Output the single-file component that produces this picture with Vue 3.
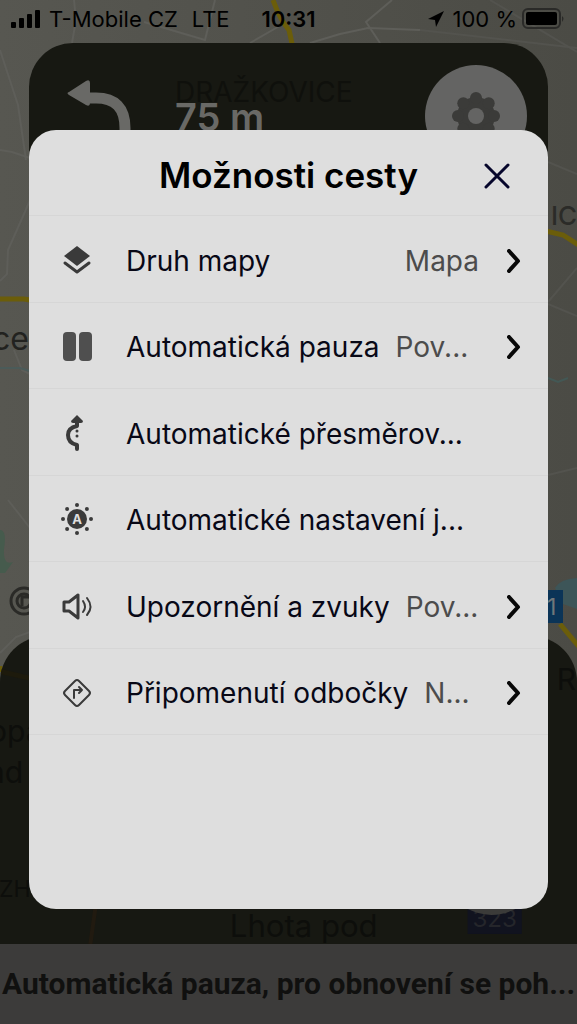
<template>
  <div class="screen">
    <!-- Map canvas under everything -->
    <svg class="map" viewBox="0 0 577 1024" preserveAspectRatio="xMidYMid slice" aria-hidden="true">
      <defs>
        <linearGradient id="land" x1="0" y1="0" x2="1" y2="0">
          <stop offset="0" stop-color="#575751" />
          <stop offset="1" stop-color="#4b4b45" />
        </linearGradient>
      </defs>
      <rect width="577" height="1024" fill="url(#land)" />
      <g class="minor-roads">
        <path d="M0 50 L18 105 L26 160" />
        <path d="M0 150 L12 152 L30 158" />
        <path d="M30 200 L24 214 L8 250 L7 274 L0 281" />
        <path d="M74 0 L76 20 L72 43" />
        <path d="M144 22 L205 40 L215 0" />
        <path d="M250 43 L283 24 M310 43 L340 34 L368 28 L420 30" />
        <path d="M392 0 L366 22 L380 43" />
        <path d="M14 350 L22 370 L30 374" />
        <path d="M8 500 L30 528" />
        <path d="M0 653 L16 637 L30 632" />
      </g>
      <g class="minor-roads dim">
        <path d="M420 30 L577 48" />
        <path d="M490 0 L577 52" />
        <path d="M548 162 L577 174" />
        <path d="M548 302 L577 268 M548 304 L577 316" />
        <path d="M548 475 L577 468" />
      </g>
      <path d="M0 368 H20 L30 371" fill="none" stroke="#4b5b59" stroke-width="2" />
      <path d="M548 378 L558 382 L568 378" fill="none" stroke="#435855" stroke-width="2" />
      <path d="M0 530 Q7 530 4 549 Q3 566 13 562 L5 573 H0Z" fill="#465b4d" />
      <path d="M555 588 Q560 579 577 578 V609 L563 604Z" fill="#3d5558" />
      <g class="main-roads">
        <path d="M273 0 Q280 20 289 30 L293 48" />
        <path d="M0 299 H24 L30 300" />
        <path d="M546 231 L563 235 L580 246" />
        <path d="M560 624 L580 648" />
        <path d="M0 672 V666" />
      </g>
      <text x="-8" y="350" class="town">ce</text>
      <text x="551" y="225" class="village">IC</text>
      <g fill="none" stroke="#2a2a27" stroke-width="3">
        <circle cx="24" cy="601" r="13" />
        <circle cx="24" cy="601" r="7" />
        <path d="M22 606 V597 H29" />
      </g>
      <rect x="530" y="590" width="33" height="33" fill="#0b3457" />
      <text x="547" y="615" class="shield">1</text>
    </svg>

    <!-- Ride screen -->
    <div class="ride">
      <header class="status">
        <div class="status-side">
          <svg class="signal" viewBox="0 0 30 20" aria-hidden="true">
            <rect x="0" y="13" width="5" height="6" rx="1" />
            <rect x="8" y="9" width="5" height="10" rx="1" />
            <rect x="16" y="5" width="5" height="14" rx="1" />
            <rect x="24" y="1" width="5" height="18" rx="1" />
          </svg>
          <span class="carrier">T-Mobile CZ</span>
          <span>LTE</span>
        </div>
        <time class="clock">10:31</time>
        <div class="status-side right">
          <svg class="location" viewBox="0 0 18 18" aria-hidden="true">
            <path d="M17 1 L1 9 L8 10 L9 17Z" />
          </svg>
          <span>100 %</span>
          <svg class="battery" viewBox="0 0 44 22" aria-hidden="true">
            <rect x="1" y="1" width="37" height="19" rx="5" fill="none" stroke="#2a2a28" stroke-width="2" />
            <rect x="4" y="4" width="31" height="13" rx="2" />
            <path d="M40 8 Q43 10 40 14Z" fill="#2a2a28" />
          </svg>
        </div>
      </header>

      <section class="turn">
        <svg class="turn-arrow" viewBox="0 0 68 70" aria-hidden="true">
          <path d="M22 19 H30 Q59 19 59 49 V70" fill="none" stroke="#696966" stroke-width="11" />
          <path d="M3 13 L20 2 Q24 0 24 4 V24 Q24 28 20 26 L3 16 Q0 14 3 13Z" fill="#696966" />
        </svg>
        <div class="turn-text">
          <span class="ghost-label">DRAŽKOVICE</span>
          <strong>75 m</strong>
        </div>
        <button class="gear" type="button" aria-label="Nastavení">
          <svg viewBox="0 0 48 48" aria-hidden="true">
            <g fill="#3b3b39">
              <circle cx="24" cy="24" r="19" />
              <circle v-for="t in teeth" :key="t.cx + '-' + t.cy" :cx="t.cx" :cy="t.cy" r="6" />
            </g>
            <circle cx="24" cy="24" r="8" fill="#646463" />
          </svg>
        </button>
      </section>

      <section class="panel">
        <svg viewBox="0 0 577 307" preserveAspectRatio="xMidYMax slice" aria-hidden="true">
          <path d="M97 264 L102 245 M97 264 L91 307" stroke="#211a10" stroke-width="4" />
          <path d="M0 35 L30 42" stroke="#1d1a0c" stroke-width="5" />
          <g class="ghost">
            <text x="-10" y="106">opa</text>
            <text x="-12" y="147">nd</text>
            <text x="556" y="54">R</text>
            <text x="0" y="260" class="small">ZH</text>
            <text x="230" y="300" class="wide">Lhota pod</text>
          </g>
          <rect x="467" y="268" width="54" height="29" fill="#11131f" />
          <text x="494" y="290" class="route">323</text>
          <circle cx="491" cy="228" r="50" fill="#3b3b39" />
        </svg>
      </section>

      <footer class="banner">Automatická pauza, pro obnovení se poh...</footer>
    </div>

    <!-- Options dialog -->
    <div class="layer">
      <section class="dialog" role="dialog" aria-modal="true" aria-labelledby="dialog-title">
        <header class="dialog-head">
          <h1 id="dialog-title">Možnosti cesty</h1>
          <button class="close" type="button" aria-label="Zavřít">
            <svg viewBox="0 0 26 26" aria-hidden="true">
              <path d="M2 2 L24 24 M24 2 L2 24" />
            </svg>
          </button>
        </header>

        <ul class="options">
          <li v-for="item in options" :key="item.icon">
            <button class="option" type="button">
              <svg class="icon" viewBox="0 0 40 40" aria-hidden="true">
                <g v-if="item.icon === 'layers'">
                  <path class="solid" d="M20 5 L33 15 L20 25 L7 15Z" />
                  <path class="line" d="M8 22 L20 31 L32 22" />
                </g>
                <g v-else-if="item.icon === 'pause'" fill="#4f4f4f">
                  <rect x="6" y="5" width="13" height="29" rx="4" />
                  <rect x="22" y="5" width="13" height="29" rx="4" />
                </g>
                <g v-else-if="item.icon === 'reroute'">
                  <path class="solid" d="M20 1 L26 7 Q26 9 24 9 H16 Q14 9 14 7Z" />
                  <path class="line bold" d="M20 6 V12 Q11 14 11 21 Q11 29 20 31 V35" />
                  <path class="dots" d="M20 17 V27" />
                </g>
                <g v-else-if="item.icon === 'brightness'">
                  <circle class="solid" cx="20" cy="19" r="10" />
                  <circle v-for="d in rays" :key="d.cx + '-' + d.cy" class="solid" :cx="d.cx" :cy="d.cy - 1" r="2" />
                  <text x="20" y="24">A</text>
                </g>
                <g v-else-if="item.icon === 'sound'">
                  <path class="line" d="M7 15 H12 L21 8 V31 L12 24 H7Z" />
                  <path class="line thin" d="M26 14 Q30 20 26 25 M30 11 Q37 20 30 28" />
                </g>
                <g v-else>
                  <path class="line thin" d="M18 8 Q20 6 22 8 L32 18 Q34 20 32 22 L22 32 Q20 34 18 32 L8 22 Q6 20 8 18Z" />
                  <path class="line thin" d="M17 25 V17 H25 M22 14 L25 17 L22 20" />
                </g>
              </svg>
              <span class="label">{{ item.label }}</span>
              <span v-if="item.value" class="value" :class="{ clipped: item.clipped }">{{ item.value }}</span>
              <svg v-if="item.value" class="chevron" viewBox="0 0 14 24" aria-hidden="true">
                <path d="M2 2 L11 12 L2 22" />
              </svg>
            </button>
          </li>
        </ul>
      </section>
    </div>
  </div>
</template>

<script setup>
import { ref } from 'vue'

const options = ref([
  { icon: 'layers', label: 'Druh mapy', value: 'Mapa' },
  { icon: 'pause', label: 'Automatická pauza', value: 'Pov...', clipped: true },
  { icon: 'reroute', label: 'Automatické přesměrov...' },
  { icon: 'brightness', label: 'Automatické nastavení j...' },
  { icon: 'sound', label: 'Upozornění a zvuky', value: 'Pov...', clipped: true },
  { icon: 'turn', label: 'Připomenutí odbočky', value: 'N...', clipped: true }
])

// eight points spread around a circle
function ring(center, radius) {
  return Array.from({ length: 8 }, (_, i) => {
    const a = (i * Math.PI) / 4
    return {
      cx: Math.round((center + radius * Math.cos(a)) * 10) / 10,
      cy: Math.round((center + radius * Math.sin(a)) * 10) / 10
    }
  })
}

const teeth = ring(24, 18)
const rays = ring(20, 14)
</script>

<style>
body {
  background: #50504b;
}
</style>

<style scoped>
.screen {
  display: grid;
  grid-template-columns: minmax(0, 1fr);
  min-height: 100vh;
  overflow: hidden;
  font-family: Inter, "Noto Sans", sans-serif;
  color: #000;
}

.map,
.ride,
.layer {
  grid-area: 1 / 1;
  min-width: 0;
}

.map {
  width: 100%;
  height: 100%;
}

.minor-roads {
  fill: none;
  stroke: #5e5e59;
  stroke-width: 2;
}

.minor-roads.dim {
  stroke: #53534e;
}

.main-roads {
  fill: none;
  stroke: #6b5d0a;
  stroke-width: 5;
}

.town {
  font-size: 32px;
  fill: #22221f;
}

.village {
  font-size: 26px;
  font-weight: 500;
  fill: #2b2b28;
}

.shield {
  font-size: 23px;
  fill: #71777a;
}

.ride {
  display: flex;
  flex-direction: column;
}

.status {
  display: grid;
  grid-template-columns: 1fr auto 1fr;
  align-items: center;
  height: 38px;
  padding: 0 11px;
  font-size: 22px;
  white-space: nowrap;
}

.status-side {
  display: flex;
  align-items: center;
}

.status-side.right {
  justify-content: flex-end;
}

.signal {
  width: 30px;
  height: 20px;
  margin-right: 8px;
}

.carrier {
  margin-right: 14px;
}

.clock {
  font-weight: 600;
}

.location {
  width: 18px;
  height: 18px;
  margin-right: 8px;
}

.battery {
  width: 44px;
  height: 22px;
  margin-left: 5px;
}

.turn {
  display: flex;
  align-items: flex-start;
  height: 160px;
  margin: 5px 29px 0;
  padding: 22px 21px 0 37px;
  box-sizing: border-box;
  border-radius: 44px;
  background: #171812;
}

.turn-arrow {
  width: 68px;
  height: 70px;
  margin-top: 14px;
}

.turn-text {
  display: flex;
  flex-direction: column;
  flex: 1;
  margin: 12px 0 0 41px;
}

.ghost-label {
  font-size: 28px;
  line-height: 30px;
  color: #0f100c;
}

.turn-text strong {
  font-size: 38px;
  font-weight: 600;
  line-height: 20px;
  color: #696966;
}

.gear {
  display: grid;
  place-items: center;
  width: 102px;
  height: 102px;
  padding: 0;
  border: 0;
  border-radius: 50%;
  background: #646463;
}

.gear svg {
  width: 48px;
  height: 48px;
}

.panel {
  display: flex;
  height: 308px;
  margin-top: auto;
  border-radius: 46px 46px 0 0;
  background: #171812;
  overflow: hidden;
}

.panel svg {
  width: 100%;
  height: 100%;
}

.ghost {
  font-size: 30px;
  fill: #0d0e0b;
}

.ghost .small {
  font-size: 23px;
}

.ghost .wide {
  font-size: 31px;
}

.route {
  font-size: 24px;
  text-anchor: middle;
  fill: #25262b;
}

.banner {
  height: 80px;
  padding: 0 2px;
  background: #3c3b3a;
  color: #10100f;
  font-family: Roboto, sans-serif;
  font-size: 30px;
  font-weight: 700;
  line-height: 80px;
  white-space: nowrap;
  overflow: hidden;
}

.layer {
  display: flex;
  z-index: 1;
  padding: 130px 29px 115px;
}

.dialog {
  flex: 1;
  min-width: 0;
  border-radius: 27px;
  background: #dedede;
  overflow: hidden;
}

.dialog-head {
  display: grid;
  grid-template-columns: 64px 1fr 64px;
  align-items: center;
  height: 85px;
  padding: 0 19px;
  border-bottom: 1px solid #d6d6d6;
}

h1 {
  grid-column: 2;
  margin: 0;
  padding-top: 4px;
  font-size: 35px;
  font-weight: 600;
  line-height: 44px;
  text-align: center;
  white-space: nowrap;
}

.close {
  display: grid;
  place-items: center;
  height: 64px;
  padding: 6px 0 0;
  border: 0;
  background: none;
}

.close svg {
  width: 26px;
  height: 26px;
  fill: none;
  stroke: #06062b;
  stroke-width: 3;
  stroke-linecap: round;
}

.options {
  display: grid;
  grid-auto-rows: 1fr;
  height: 519px;
  margin: 0;
  padding: 0;
  list-style: none;
}

.options li {
  display: flex;
  border-bottom: 1px solid #d6d6d6;
}

.option {
  display: flex;
  flex: 1;
  align-items: center;
  min-width: 0;
  padding: 4px 27px 0 28px;
  border: 0;
  background: none;
  color: #080816;
  font: inherit;
  font-size: 28px;
  text-align: left;
  white-space: nowrap;
}

.icon {
  flex: none;
  width: 40px;
  height: 40px;
  margin-right: 29px;
}

.icon .solid {
  fill: #3a3a3a;
}

.icon .line {
  fill: none;
  stroke: #3a3a3a;
  stroke-width: 3;
  stroke-linecap: round;
  stroke-linejoin: round;
}

.icon .bold {
  stroke-width: 4;
}

.icon .thin {
  stroke-width: 2;
}

.icon .dots {
  fill: none;
  stroke: #3a3a3a;
  stroke-width: 3;
  stroke-linecap: round;
  stroke-dasharray: 0 5;
}

.icon text {
  font-size: 13px;
  font-weight: 700;
  text-anchor: middle;
  fill: #dedede;
}

.value {
  flex: 1;
  margin: 0 28px 0 16px;
  color: #4c4c4c;
  text-align: right;
}

.value.clipped {
  text-align: left;
}

.chevron {
  flex: none;
  width: 14px;
  height: 24px;
  fill: none;
  stroke: #080808;
  stroke-width: 4;
  stroke-linecap: round;
  stroke-linejoin: round;
}
</style>
